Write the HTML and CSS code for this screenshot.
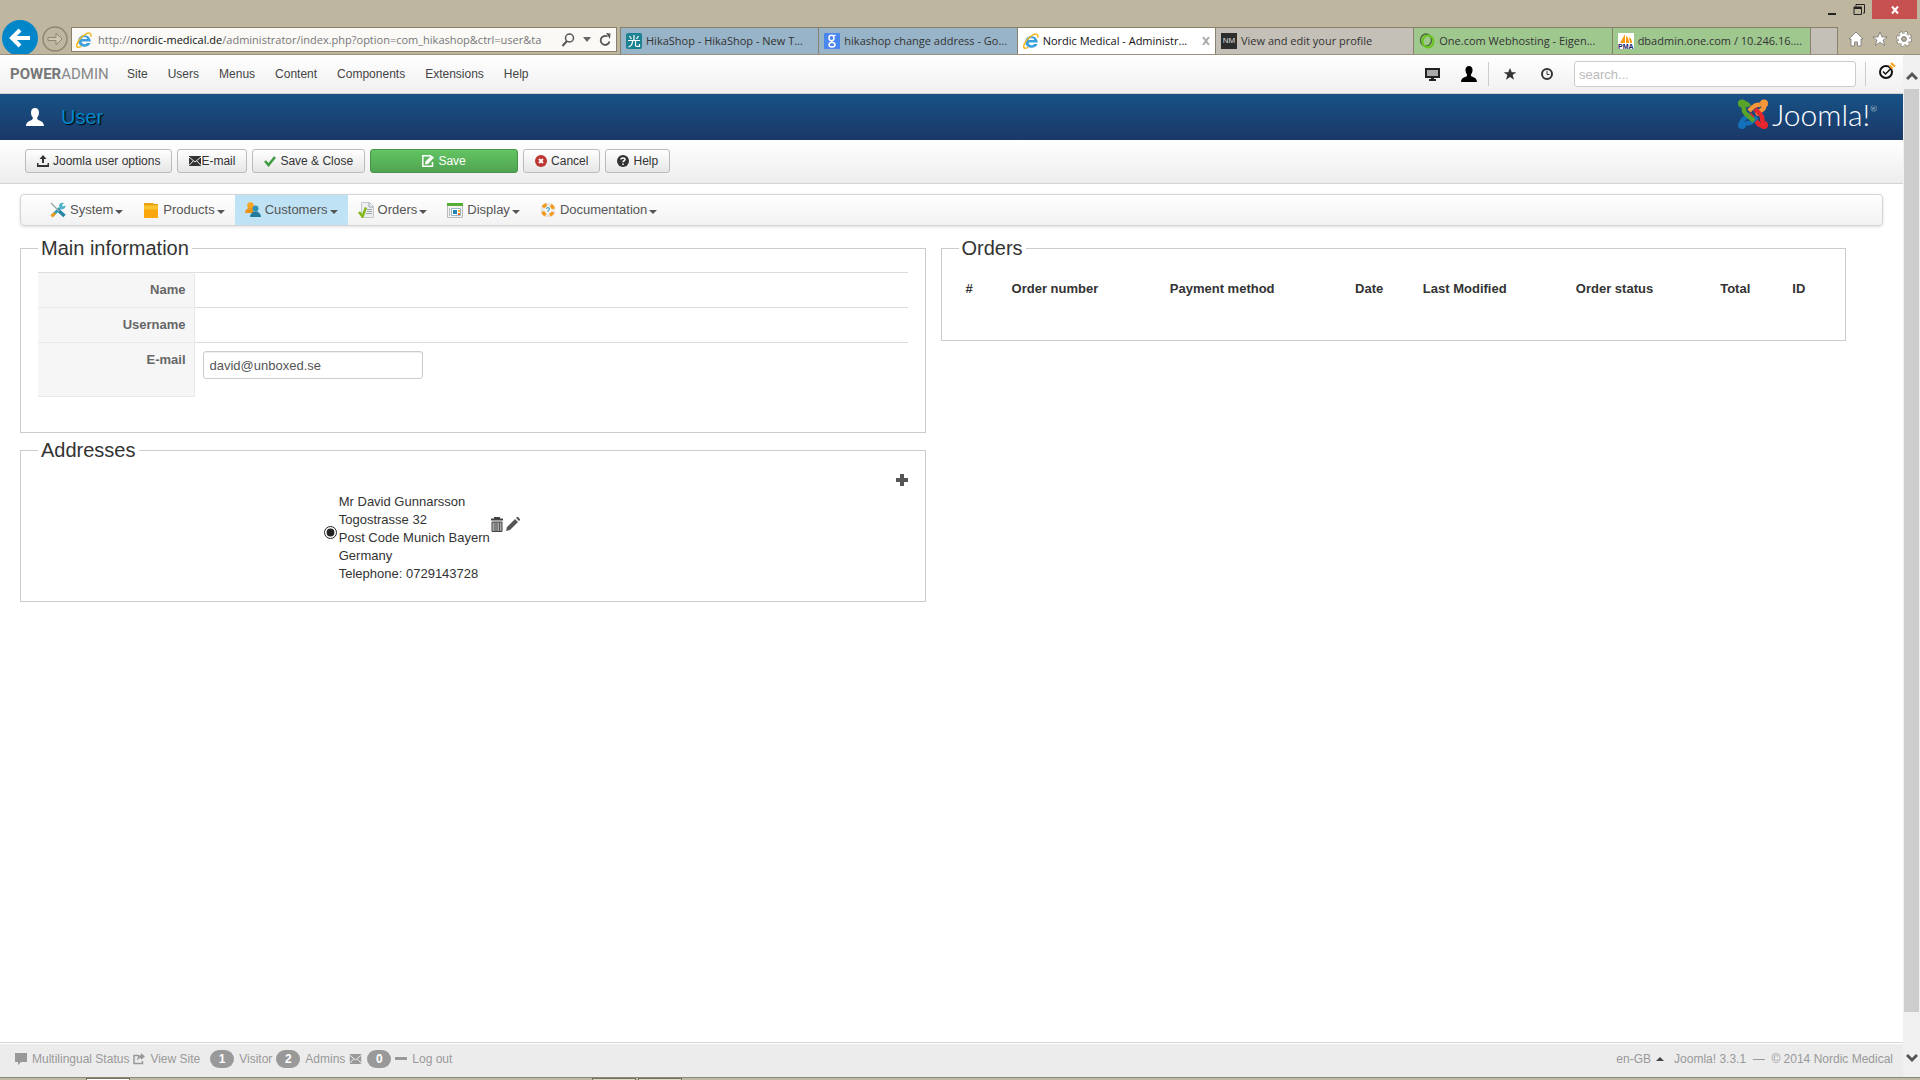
FILE: index.html
```html
<!DOCTYPE html>
<html lang="en">
<head>
    <meta charset="UTF-8">
    <meta name="viewport" content="width=device-width, initial-scale=1.0">
    <title>Nordic Medical - Administration</title>
    <link rel="stylesheet" href="styles.css">
</head>
<body>

    <!-- shared icons -->
    <svg class="defs" width="0" height="0">
        <symbol id="ie" viewBox="0 0 16 16">
            <path d="M14.800 9.500H5.600c.2 3.200 4.300 3.600 5.300 1.400h3.500C12.700 16.500 2.200 16 2.200 8.700S14.500 1 14.800 9.500zM5.700 7h5.600C10.800 4.200 6.200 4.200 5.700 7z" fill="#3aa0dc"/>
            <path d="M14.600 4.800c1.300-3.700-1.300-4.700-5-2.700C4 5 0 11.800.8 14.400c.6 1.500 2.900.8 4.600-.2" fill="none" stroke="#f5b921" stroke-width="1.500"/>
        </symbol>
        <symbol id="person" viewBox="0 0 18 18">
            <path d="M9 0c2.700 0 4 2 4 4.500 0 2-.8 4-1.800 5 0 1.500.3 2.200 1.500 2.700 2.500 1 5 1.800 5.300 5.800H0c.3-4 2.800-4.800 5.300-5.800 1.200-.5 1.500-1.200 1.500-2.700-1-1-1.800-3-1.800-5C5 2 6.300 0 9 0z" fill="currentColor"/>
        </symbol>
        <symbol id="star" viewBox="0 0 16 16">
            <path d="M8 1l2 5h5.200l-4.200 3.200 1.600 5.300L8 11.300l-4.600 3.200L5 9.200.8 6H6z" fill="currentColor"/>
        </symbol>
        <symbol id="mail" viewBox="0 0 12 12">
            <path d="M0 1h12v10H0z" fill="currentColor"/>
            <path d="M0 2l6 5 6-5M0 10.500l4.300-4.700M12 10.500L7.700 5.800" fill="none" stroke="#eee" stroke-width="1"/>
        </symbol>
    </svg>

    <header class="chrome">
        <div class="titlebar">
            <button class="win" aria-label="Minimize"><svg width="12" height="12"><path d="M2 9h8v2H2z" fill="#222"/></svg></button>
            <button class="win" aria-label="Restore"><svg width="12" height="12"><path d="M3 2V.5h8.500V9H10M1 3h7.500v7.500H1z" fill="none" stroke="#222"/><path d="M1 3h8v2H1z" fill="#222"/></svg></button>
            <button class="win close" aria-label="Close"><svg width="10" height="10"><path d="M2 1.500l6 7M8 1.500l-6 7" stroke="#fff" stroke-width="2"/></svg></button>
        </div>
        <div class="browser-bar">
            <button class="back" aria-label="Back"><svg width="36" height="36"><circle cx="18" cy="18" r="18" fill="#0086c9"/><path d="M28 18H10M18 10l-8 8 8 8" fill="none" stroke="#fff" stroke-width="4"/></svg></button>
            <button class="forward" aria-label="Forward"><svg width="26" height="26"><circle cx="13" cy="13" r="12" fill="none" stroke="#8f876f" stroke-width="1.500"/><path d="M6 11.500h8V7l6 6-6 6v-4.500H6z" fill="#cfc7b2" stroke="#8f876f"/></svg></button>
            <div class="address">
                <svg width="16" height="16"><use href="#ie"/></svg>
                <span class="url">http://<b>nordic-medical.de</b>/administrator/index.php?option=com_hikashop&amp;ctrl=user&amp;ta</span>
                <button aria-label="Search"><svg width="14" height="14"><circle cx="8.500" cy="5" r="4" fill="none" stroke="#555" stroke-width="1.500"/><path d="M6 8l-4.500 5" stroke="#555" stroke-width="2"/></svg></button>
                <button aria-label="Show history"><svg width="8" height="5"><path d="M0 0h8L4 5z" fill="#666"/></svg></button>
                <button aria-label="Refresh"><svg width="12" height="14"><path d="M10.500 8.500A4.500 4.500 0 1 1 8.500 3.500" fill="none" stroke="#555" stroke-width="1.800"/><path d="M7 0l4.500.5-.5 5.500z" fill="#555"/></svg></button>
            </div>
            <nav class="tabs">
                <a href="#" class="tab blue">
                    <svg width="16" height="16"><rect width="16" height="16" rx="2" fill="#1b8291"/><path d="M8 2v5M3.500 3l2 3M12.500 3l-2 3M2 7.500h12M6.500 8c0 3-1 5-4 6M9.500 8v4.500c0 1 1 1 4 1V11" fill="none" stroke="#fff" stroke-width="1.200"/></svg>
                    <span>HikaShop - HikaShop - New T...</span>
                </a>
                <a href="#" class="tab blue">
                    <svg width="16" height="16"><rect width="16" height="16" rx="1" fill="#4a86f0"/><ellipse cx="7.500" cy="5" rx="2.500" ry="2.700" fill="none" stroke="#fff" stroke-width="1.500"/><ellipse cx="8" cy="11.800" rx="3" ry="2.200" fill="none" stroke="#fff" stroke-width="1.500"/><path d="M9 2.300h3M7 7.500l1.500 2" stroke="#fff"/></svg>
                    <span>hikashop change address - Go...</span>
                </a>
                <a href="#" class="tab active">
                    <svg width="16" height="16"><use href="#ie"/></svg>
                    <span>Nordic Medical - Administr...</span>
                    <svg class="tab-close" width="8" height="8"><path d="M1 0l6 8M7 0L1 8" stroke="#aaa" stroke-width="2"/></svg>
                </a>
                <a href="#" class="tab grey">
                    <i class="nm">NM</i>
                    <span>View and edit your profile</span>
                </a>
                <a href="#" class="tab green">
                    <svg width="16" height="16"><ellipse cx="7" cy="7" rx="5.500" ry="6" fill="none" stroke="#4d6b3c" stroke-width="1.500"/><ellipse cx="9" cy="8.500" rx="5.500" ry="6" fill="none" stroke="#69c41c" stroke-width="2"/></svg>
                    <span>One.com Webhosting - Eigen...</span>
                </a>
                <a href="#" class="tab green">
                    <svg width="16" height="16"><path d="M0 0h16v16H0z" fill="#fff"/><path d="M7 1v9H2zM8 3c2 1 3 4 3 7H8zM11 4c2 1 3 3 3 6h-2z" fill="#f89c0e"/><text class="pma" x="0" y="16">PMA</text></svg>
                    <span>dbadmin.one.com / 10.246.16....</span>
                </a>
                <button class="new-tab" aria-label="New tab"></button>
            </nav>
            <div class="tools">
                <button aria-label="Home"><svg width="16" height="16"><path d="M8 1l7 7h-2v7H9.500v-4h-3v4H3V8H1z" fill="#fff" stroke="#777" stroke-width=".8"/></svg></button>
                <button aria-label="Favorites"><svg width="16" height="16"><path d="M8 1l2 5h5.200l-4.200 3.200 1.600 5.300L8 11.300l-4.600 3.200L5 9.200.8 6H6z" fill="#fff" stroke="#777" stroke-width=".8"/></svg></button>
                <button aria-label="Tools"><svg width="16" height="16"><circle cx="8" cy="8" r="6" fill="none" stroke="#777" stroke-width="4" stroke-dasharray="2.700 2"/><circle cx="8" cy="8" r="6" fill="none" stroke="#fff" stroke-width="2.500" stroke-dasharray="2.300 2.400"/><circle cx="8" cy="8" r="4" fill="none" stroke="#fff" stroke-width="2.500"/><circle cx="8" cy="8" r="2.300" fill="none" stroke="#777"/></svg></button>
            </div>
        </div>
    </header>

    <div class="window">
        <div class="page">
            <div class="topnav">
                <a href="#" class="brand"><b>POWER</b>ADMIN</a>
                <nav class="mainmenu">
                    <a href="#">Site</a>
                    <a href="#">Users</a>
                    <a href="#">Menus</a>
                    <a href="#">Content</a>
                    <a href="#">Components</a>
                    <a href="#">Extensions</a>
                    <a href="#">Help</a>
                </nav>
                <div class="quick">
                    <a href="#" aria-label="Preview"><svg width="15" height="13"><path d="M1 1h13v8H1z" fill="#aaa" stroke="#222" stroke-width="2"/><path d="M6 9h3v2h2v2H4v-2h2z" fill="#222"/></svg></a>
                    <a href="#" class="black" aria-label="Profile"><svg width="16" height="16"><use href="#person"/></svg></a>
                </div>
                <div class="quick lined">
                    <a href="#" aria-label="Favorites"><svg width="14" height="14"><use href="#star"/></svg></a>
                    <a href="#" aria-label="History"><svg width="14" height="14"><circle cx="7" cy="7" r="5" fill="none" stroke="#333" stroke-width="2"/><path d="M7 4v3.500h2.500" fill="none" stroke="#333"/></svg></a>
                </div>
                <input class="search" type="text" placeholder="search..." aria-label="Search">
                <a href="#" class="status" aria-label="Status"><svg width="18" height="18"><circle cx="8" cy="10" r="6" fill="none" stroke="#111" stroke-width="2"/><path d="M5 9.500l2.500 2.500 5-5" fill="none" stroke="#111" stroke-width="1.500"/><path d="M11.500 3.500l3 3M13 1l4 3.500" stroke="#f9a01b" stroke-width="2"/></svg></a>
            </div>

            <div class="header">
                <svg class="header-icon" width="18" height="18"><use href="#person"/></svg>
                <h1>User</h1>
                <a href="#" class="joomla">
                    <svg width="30" height="30" viewBox="0 0 30 30">
                        <g fill="none" stroke-width="4.500" stroke-linejoin="round">
                            <path d="M26 26c-4 1-6-1-7-3l-8-8" stroke="#e8262d"/>
                            <path d="M4 26c-1-4 1-6 3-7l5-4M7 24c4 1 6 0 8-2l4-4" stroke="#1470b8"/>
                            <path d="M26 4.500c1 4-1 6-3 7l-5 4M23 6c-4-1-6 0-8 2l-4 4" stroke="#f8963a"/>
                            <path d="M4 4.500c4-1 6 1 7 3M6 7c-1 4 0 6 2 8l8 7" stroke="#5aa32a"/>
                            <path d="M24 23c1-4 0-6-2-8l-5-5" stroke="#e8262d"/>
                        </g>
                        <circle cx="4" cy="4.500" r="4" fill="#5aa32a"/>
                        <circle cx="26" cy="4.500" r="4" fill="#f8963a"/>
                        <circle cx="4" cy="26" r="4" fill="#1470b8"/>
                        <circle cx="26" cy="26" r="4" fill="#e8262d"/>
                    </svg>
                    <span>Joomla!<sup>®</sup></span>
                </a>
            </div>

            <div class="toolbar">
                <button class="btn"><svg width="12" height="12"><path d="M6 0l3.500 4H7v4H5V4H2.500zM0 8h1.500v2h9V8H12v4H0z" fill="#333"/></svg>Joomla user options</button>
                <button class="btn tight"><svg width="12" height="12"><use href="#mail"/></svg>E-mail</button>
                <button class="btn"><svg width="12" height="12"><path d="M1 6l3.500 4L11 2" fill="none" stroke="#3f9b3f" stroke-width="2.600"/></svg>Save &amp; Close</button>
                <button class="btn save"><svg width="12" height="12"><path d="M9 .8H.8v10.400h9.700V7" fill="none" stroke="#fff" stroke-width="1.500"/><path d="M3 9.500L3.500 6.500 9.500.5 12 2.500 6 9z" fill="#fff"/></svg>Save</button>
                <button class="btn"><svg width="12" height="12"><circle cx="6" cy="6" r="6" fill="#bd362f"/><path d="M4 4l4 4M8 4L4 8" stroke="#fff" stroke-width="1.800"/></svg>Cancel</button>
                <button class="btn"><svg width="12" height="12"><circle cx="6" cy="6" r="6" fill="#333"/><path d="M4 4.500c0-2 4-2 4 0C8 6 6 5.500 6 7.300M6 8.500V10" fill="none" stroke="#fff" stroke-width="1.500"/></svg>Help</button>
            </div>

            <nav class="shopmenu">
                <a href="#"><svg width="16" height="16"><path d="M2 14L10 6" stroke="#2e9cb5" stroke-width="3"/><path d="M9 4c0-3 3-4 5-3l-2 2 1 1.500 2.500-1C16 6 13 8 10.500 7z" fill="#4fb1c6"/><path d="M1 1l8 8" stroke="#9aa" stroke-width="1.500"/><path d="M9 9l5.500 5" stroke="#2686a0" stroke-width="3.500"/><path d="M1.500 14.500L5 11" stroke="#ef9a1a" stroke-width="3"/></svg>System<i class="caret"></i></a>
                <a href="#"><svg width="16" height="16"><path d="M1 1h9l1 1h4v3H1z" fill="#e8a015"/><path d="M1 3.500h14V16H1z" fill="#f9a70d"/><path d="M1 3.500h14v4H1z" fill="#fcc42f"/></svg>Products<i class="caret"></i></a>
                <a href="#" class="current"><svg width="16" height="16"><circle cx="5.500" cy="3.500" r="3.300" fill="#f5a623"/><path d="M0 11c0-3 2-4 3.500-5h4L9 11z" fill="#e8951a"/><circle cx="10.500" cy="6.500" r="3" fill="#2f93b6"/><path d="M5 15c0-3 2-4 3.500-5.500h4C14 11 16 12 16 15z" fill="#217c9c"/></svg>Customers<i class="caret"></i></a>
                <a href="#"><svg width="16" height="16"><path d="M3.500.5h8l4 4v11h-12z" fill="#eceeef" stroke="#c3c8cc"/><path d="M11 .5V5h4.500M9 7.500h5M9 9.500h5M8 11.500h6" fill="none" stroke="#9fa8af"/><path d="M1 10l3.500 4.500L8 5.500" fill="none" stroke="#83b81a" stroke-width="2.500"/></svg>Orders<i class="caret"></i></a>
                <a href="#"><svg width="16" height="16"><path d="M.5 1.500h15v14H.5z" fill="#f2f2f2" stroke="#b8bcc0"/><path d="M0 1h16v3H0z" fill="#55ad36"/><path d="M2 6h1v8H2z" fill="#bbb"/><path d="M4.500 6.500h9v7h-9z" fill="#fff" stroke="#9db4c4"/><path d="M6 8h4v4H6z" fill="#2083b5"/><path d="M11 8h2v2h-2z" fill="#f2b21e"/><path d="M11 11h2v2h-2z" fill="#e6691e"/></svg>Display<i class="caret"></i></a>
                <a href="#"><svg width="16" height="16"><circle cx="8" cy="8" r="5.500" fill="none" stroke="#e7e7e7" stroke-width="3.500"/><circle cx="8" cy="8" r="5.500" fill="none" stroke="#f29a1f" stroke-width="3.500" stroke-dasharray="4.320 4.320" stroke-dashoffset="-2.200"/><path d="M6.500 7c0-1.800 3-1.800 3 0 0 1-1.500 1-1.500 2v1" fill="none" stroke="#4aa5c9" stroke-width="1.200"/></svg>Documentation<i class="caret"></i></a>
            </nav>

            <main class="columns">
                <div class="column">
                    <fieldset>
                        <legend>Main information</legend>
                        <table class="details">
                            <tr>
                                <th scope="row">Name</th>
                                <td></td>
                            </tr>
                            <tr>
                                <th scope="row">Username</th>
                                <td></td>
                            </tr>
                            <tr class="tall">
                                <th scope="row"><label for="email">E-mail</label></th>
                                <td><input class="field" type="text" id="email" value="david@unboxed.se"></td>
                            </tr>
                        </table>
                    </fieldset>

                    <fieldset class="addresses">
                        <legend>Addresses</legend>
                        <div class="add">
                            <a href="#" aria-label="Add address"><svg width="12" height="12"><path d="M4 0h4v4h4v4H8v4H4V8H0V4h4z" fill="#555"/></svg></a>
                        </div>
                        <div class="address-row">
                            <input type="radio" name="address" id="address1" checked>
                            <label for="address1">Mr David Gunnarsson<br>Togostrasse 32<br>Post Code Munich Bayern<br>Germany<br>Telephone: 0729143728</label>
                            <div class="actions">
                                <a href="#" aria-label="Delete"><svg width="12" height="15"><path d="M4 1.500V.8h4v.7M0 2.500h12" fill="none" stroke="#444" stroke-width="2"/><path d="M1 5h10v9.500H1z" fill="#aaa" stroke="#444"/><path d="M4 5v9M6 5v9M8.500 5v9" stroke="#555"/></svg></a>
                                <a href="#" aria-label="Edit"><svg width="14" height="14"><path d="M0 14l1-4 8-8 3 3-8 8zM10 1l1-1c1-.5 3.500 2 3 3l-1 1z" fill="#555"/></svg></a>
                            </div>
                        </div>
                    </fieldset>
                </div>

                <div class="column">
                    <fieldset class="orders">
                        <legend>Orders</legend>
                        <table class="list">
                            <colgroup>
                                <col class="c-num"><col class="c-order"><col class="c-pay"><col class="c-date">
                                <col class="c-mod"><col class="c-status"><col class="c-total"><col class="c-id">
                            </colgroup>
                            <tr>
                                <th scope="col">#</th>
                                <th scope="col">Order number</th>
                                <th scope="col">Payment method</th>
                                <th scope="col">Date</th>
                                <th scope="col">Last Modified</th>
                                <th scope="col">Order status</th>
                                <th scope="col">Total</th>
                                <th scope="col">ID</th>
                            </tr>
                        </table>
                    </fieldset>
                </div>
            </main>

            <footer class="footer">
                <a href="#"><svg width="12" height="14"><path d="M0 1h12v9H6l-3 3v-3H0z" fill="#999"/></svg>Multilingual Status</a>
                <a href="#"><svg width="12" height="12"><path d="M6 2.500H1v8h8.500V8" fill="none" stroke="#999" stroke-width="1.500"/><path d="M8 0l4 3.500L8 7V5C6 5 5 6 4 8c0-4 1.500-6 4-6z" fill="#999"/></svg>View Site</a>
                <span class="count"><b class="badge">1</b>Visitor</span>
                <span class="count"><b class="badge">2</b>Admins</span>
                <a href="#" aria-label="Messages"><svg width="13" height="12" viewBox="0 0 12 12"><use href="#mail"/></svg><b class="badge">0</b></a>
                <a href="#"><svg width="12" height="10"><path d="M0 3h12v3H0z" fill="#999"/></svg>Log out</a>
                <a href="#" class="lang">en-GB<svg width="8" height="4"><path d="M0 4l4-4 4 4z" fill="#444"/></svg></a>
                <span>Joomla! 3.3.1 &nbsp;—&nbsp; © 2014 Nordic Medical</span>
            </footer>
        </div>
        <div class="scrollbar">
            <svg width="12" height="10"><path d="M1 8l5-5 5 5" fill="none" stroke="#555" stroke-width="3"/></svg>
            <div class="thumb"></div>
            <svg width="12" height="10"><path d="M1 2l5 5 5-5" fill="none" stroke="#555" stroke-width="3"/></svg>
        </div>
    </div>
    <div class="taskbar">
        <i class="task first"></i>
        <i class="task second"></i>
        <i class="task"></i>
    </div>

</body>
</html>
```
FILE: styles.css
```css
*{
    box-sizing: border-box;
}
body{
    margin: 0;
    height: 100vh;
    display: flex;
    flex-direction: column;
    overflow: hidden;
    background-color: #fff;
    color: #333;
    font: 13px/18px "Liberation Sans", Arial, sans-serif;
}
a{
    color: inherit;
    text-decoration: none;
}
button{
    flex: none;
    border: 0;
    padding: 0;
    background: none;
    font: inherit;
    color: inherit;
}
svg{
    flex: none;
    display: block;
}
.defs{
    position: absolute;
}

/* browser window */
.chrome{
    background-color: #bfb6a0;
    border-bottom: 1px solid #99917b;
    font: 11px/16px "Open Sans", "Noto Sans", sans-serif;
}
.titlebar{
    height: 19px;
    display: flex;
    justify-content: flex-end;
    padding-right: 3px;
}
.win{
    width: 27px;
    display: flex;
    align-items: center;
    justify-content: center;
}
.win.close{
    width: 45px;
    background-color: #c75050;
}
.browser-bar{
    height: 35px;
    display: flex;
    align-items: flex-end;
    padding-left: 2px;
}
.back{
    height: 34px;
    overflow: hidden;
}
.forward{
    margin: 0 3px 2px 4px;
}
.address{
    flex: 0 0 546px;
    height: 25px;
    margin: 0 3px 2px 0;
    display: flex;
    align-items: center;
    gap: 6px;
    padding: 0 5px 0 4px;
    background-color: #faf9f6;
    border: 1px solid #87806c;
}
.url{
    flex: 1;
    white-space: nowrap;
    color: #777;
}
.url b{
    font-weight: normal;
    color: #111;
}
.address button + button{
    margin-left: 2px;
}
.tabs{
    flex: 1;
    min-width: 0;
    display: flex;
    height: 27px;
    border: 1px solid #87806c;
    border-bottom: 0;
}
.tab{
    flex: 1;
    min-width: 0;
    display: flex;
    align-items: center;
    gap: 4px;
    padding: 0 5px;
    border-right: 1px solid #87806c;
    white-space: nowrap;
    color: #333;
}
.tab span{
    flex: 1;
}
.tab.blue{
    background-color: #98b4c8;
}
.tab.active{
    background-color: #fff;
    color: #111;
}
.tab.grey, .new-tab{
    background-color: #c4c0b8;
}
.tab.green{
    background-color: #9fc88f;
}
.nm{
    width: 16px;
    background-color: #2d2d2d;
    color: #ddd;
    font: 8px/16px "Liberation Sans", Arial, sans-serif;
    text-align: center;
}
.pma{
    font: bold 7px "Liberation Sans", Arial, sans-serif;
    fill: #22226b;
}
.new-tab{
    width: 26px;
}
.tools{
    flex: none;
    display: flex;
    gap: 8px;
    padding: 0 8px 7px 10px;
}

/* page and its scrollbar */
.window{
    flex: 1;
    min-height: 0;
    display: flex;
}
.page{
    flex: 1;
    min-width: 0;
    display: flex;
    flex-direction: column;
}
.scrollbar{
    width: 17px;
    display: flex;
    flex-direction: column;
    align-items: center;
    padding: 16px 0 14px;
    background-color: #f0f0f0;
}
.thumb{
    width: 15px;
    flex: 1;
    margin: 8px 0 41px;
    background-color: #cdcdcd;
}
.taskbar{
    height: 3px;
    display: flex;
    gap: 2px;
    background-color: #bfb9a6;
    border-top: 1px solid #8d8874;
}
.task{
    width: 44px;
    background-color: #ddd8cb;
    border: 1px solid #77715f;
    border-bottom: 0;
}
.task.first{
    margin: 0 460px 0 86px;
    background-color: #fff;
}

.topnav{
    height: 39px;
    display: flex;
    align-items: center;
    padding-left: 10px;
    background-image: linear-gradient(#fff, #f0f0f0);
    border-bottom: 1px solid #d4d0cc;
    font-size: 12px;
    color: #444;
}
.brand{
    width: 117px;
    font: 15px/20px Roboto, sans-serif;
    color: #888;
}
.brand b{
    color: #777;
}
.mainmenu{
    flex: 1;
    display: flex;
    gap: 20px;
}
.quick{
    display: flex;
    align-items: center;
    gap: 21px;
    height: 24px;
    padding-right: 11px;
    color: #333;
}
.black{
    color: #000;
}
.lined{
    gap: 23px;
    padding: 0 20px 0 14px;
    border-left: 1px solid #ccc;
}
.search{
    width: 282px;
    height: 26px;
    padding: 0 4px;
    border: 1px solid #ccc;
    border-radius: 3px;
    font: 13px "Liberation Sans", Arial, sans-serif;
}
.search::placeholder{
    color: #bbb;
}
.status{
    height: 24px;
    margin-left: 9px;
    padding: 0 7px 0 12px;
    border-left: 1px solid #ccc;
}

.header{
    height: 46px;
    display: flex;
    align-items: center;
    padding: 0 26px;
    background-image: linear-gradient(#175286, #1a3867);
    color: #fff;
}
.header h1{
    flex: 1;
    margin: 0 0 0 17px;
    font-size: 20px;
    line-height: 24px;
    font-weight: normal;
    color: #0088cc;
    text-shadow: 1px 1px 1px #000;
}
.joomla{
    display: flex;
    align-items: center;
    gap: 4px;
    padding-bottom: 6px;
    font: 300 30px/30px Lato, sans-serif;
}
.joomla sup{
    font-size: 8px;
    line-height: 8px;
    vertical-align: 14px;
}

.toolbar{
    height: 44px;
    display: flex;
    align-items: center;
    gap: 5px;
    padding: 0 25px 2px;
    background-image: linear-gradient(#fff, #ededed);
    border-bottom: 1px solid #d3d3d3;
}
.btn{
    height: 24px;
    display: flex;
    align-items: center;
    justify-content: center;
    gap: 4px;
    padding: 0 11px;
    border: 1px solid #bbb;
    border-radius: 3px;
    background-image: linear-gradient(#fff, #e6e6e6);
    font-size: 12px;
    line-height: 18px;
}
.btn.tight{
    gap: 0;
}
.btn.save{
    width: 148px;
    border-color: #49934a;
    background-image: linear-gradient(#62c462, #51a351);
    color: #fff;
}

.shopmenu{
    height: 32px;
    margin: 10px 20px 0;
    display: flex;
    padding-left: 19px;
    border: 1px solid #d4d4d4;
    border-radius: 4px;
    background-image: linear-gradient(#fff, #f2f2f2);
    box-shadow: 0 1px 3px #ddd;
    color: #555;
}
.shopmenu a{
    display: flex;
    align-items: center;
    padding: 0 10px;
}
.shopmenu svg{
    margin-right: 4px;
}
.shopmenu .current{
    background-color: #bfe2f5;
}
.caret{
    margin: 3px 0 0 2px;
    border: 4px solid transparent;
    border-top-color: #555;
    border-bottom: 0;
}

.columns{
    flex: 1;
    display: grid;
    grid-template-columns: 1fr 1fr;
    align-content: start;
    gap: 15px;
    padding: 12px 57px 0 20px;
}
fieldset{
    min-width: 0;
    margin: 0 0 7px;
    padding: 14px 17px 35px;
    border: 1px solid #ccc;
}
legend{
    padding: 0 3px;
    font-size: 20px;
    line-height: 20px;
}
table{
    width: 100%;
    border-collapse: collapse;
}
.details tr{
    height: 35px;
}
.details .tall{
    height: 54px;
}
.details th, .details td{
    padding: 8px;
    vertical-align: top;
    border-top: 1px solid #ddd;
}
.details th{
    width: 156px;
    text-align: right;
    color: #666;
    background-color: #f6f6f6;
    border-right: 1px solid #e9e9e9;
    border-bottom: 1px solid #e9e9e9;
}
.field{
    display: block;
    width: 220px;
    height: 28px;
    padding: 0 6px;
    border: 1px solid #ccc;
    border-radius: 3px;
    box-shadow: inset 0 1px 1px #eee;
    font: inherit;
    color: #555;
}
.addresses{
    padding-bottom: 18px;
}
.add{
    display: flex;
    justify-content: flex-end;
    padding-bottom: 7px;
}
.address-row{
    display: flex;
    justify-content: center;
    align-items: center;
    padding-right: 102px;
}
.address-row input{
    width: 13px;
    height: 13px;
    margin: 0 2px 12px 0;
    accent-color: #222;
}
.actions{
    display: flex;
    gap: 3px;
    margin: 0 0 28px 1px;
}
.orders{
    padding-bottom: 35px;
}
.list{
    table-layout: fixed;
}
.list th{
    padding: 8px 0 7px 7px;
    text-align: left;
}
.c-num{ width: 5.3%; }
.c-order{ width: 18.2%; }
.c-pay{ width: 21.3%; }
.c-date{ width: 7.8%; }
.c-mod{ width: 17.6%; }
.c-status{ width: 16.6%; }
.c-total{ width: 8.3%; }
.c-id{ width: 4.9%; }

.footer{
    height: 35px;
    display: flex;
    align-items: center;
    gap: 4px;
    padding: 0 10px 2px 15px;
    background-color: #ececec;
    border-top: 1px solid #d6d6d6;
    box-shadow: inset 0 1px 0 #fff;
    font-size: 12px;
    color: #999;
}
.footer a, .count{
    display: flex;
    align-items: center;
    gap: 5px;
}
.count:first-of-type{
    margin-left: 6px;
}
.badge{
    width: 24px;
    border-radius: 9px;
    background-color: #999;
    color: #fff;
    line-height: 18px;
    text-align: center;
}
.footer .lang{
    margin-left: auto;
    margin-right: 6px;
}
```
